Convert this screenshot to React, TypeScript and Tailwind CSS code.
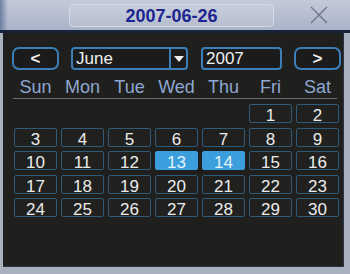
const weekDays = ["Sun", "Mon", "Tue", "Wed", "Thu", "Fri", "Sat"];

function App() {
    const cells: (number | null)[] = [null, null, null, null, null];
    for (let d = 1; d <= 30; d++) cells.push(d);
    const selected = [13, 14];

    return (
        <div
            className="w-[350px] h-[274px] bg-[#a9b1be] flex flex-col overflow-hidden"
            style={{ fontFamily: '"Liberation Sans", Arial, sans-serif' }}>
            {/* title bar */}
            <div className="h-[30px] flex items-center relative bg-gradient-to-b from-[#c3cad9] to-[#aab4c8]">
                <div className="absolute left-0 top-0 h-full w-[8px] bg-gradient-to-r from-[#6c7ea2] to-transparent" />
                <div className="ml-[69px] mt-[1px] w-[205px] h-[23px] rounded-[4px] border border-[#d4d9e3] bg-gradient-to-b from-[#c8cedb] to-[#b7bfd0] flex items-center justify-center">
                    <span className="text-[18px] font-bold text-[#1d2590] leading-none">
                        2007-06-26
                    </span>
                </div>
                <svg className="ml-[35px]" width="20" height="18" viewBox="0 0 20 18">
                    <path d="M2 1 L18 17 M18 1 L2 17" stroke="#6e7585" strokeWidth="1.4" fill="none" />
                </svg>
            </div>
            <div className="h-[3px] bg-[#17233a]" />

            {/* body */}
            <div className="flex-1 ml-[3px] mr-[6px] mb-[7px] bg-[#1f201d] border-r border-b border-[#2b3346] flex flex-col">
                {/* controls */}
                <div className="flex items-center h-[23px] mt-[14px] ml-[9px] text-[17px] text-[#f0f0f0]">
                    <div className="w-[47px] h-[23px] rounded-[7px] border-2 border-[#3c7fb8] bg-[#1a1b1a] flex items-center justify-center leading-none font-bold">
                        &lt;
                    </div>
                    <div className="ml-[12px] w-[117px] h-[23px] rounded-[4px] border-2 border-[#3c7fb8] bg-[#1a1b1a] flex items-stretch">
                        <div className="flex-1 flex items-center pl-[3px] leading-none">June</div>
                        <div className="w-[17px] border-l-2 border-[#3c7fb8] flex items-center justify-center">
                            <svg width="10" height="6" viewBox="0 0 10 6">
                                <path d="M0 0 L10 0 L5 6 Z" fill="#f0f0f0" />
                            </svg>
                        </div>
                    </div>
                    <div className="ml-[13px] w-[81px] h-[23px] rounded-[4px] border-2 border-[#3c7fb8] bg-[#1a1b1a] flex items-center pl-[3px] leading-none">
                        2007
                    </div>
                    <div className="ml-[12px] w-[47px] h-[23px] rounded-[7px] border-2 border-[#3c7fb8] bg-[#1a1b1a] flex items-center justify-center leading-none font-bold">
                        &gt;
                    </div>
                </div>

                {/* weekday header */}
                <div className="ml-[11px] mt-[7px] grid grid-cols-[repeat(7,43px)] gap-x-[4px] text-[18px] leading-[20px] text-[#8fa6d0]">
                    {weekDays.map((w) => (
                        <div key={w} className="text-center">
                            {w}
                        </div>
                    ))}
                </div>
                <div className="ml-[10px] w-[324px] h-[1px] mt-[1px] bg-[#6c6f72]" />

                {/* days */}
                <div className="ml-[11px] mt-[5px] grid grid-cols-[repeat(7,43px)] auto-rows-[19px] gap-x-[4px] gap-y-[4.5px] text-[17px] leading-[19px]">
                    {cells.map((d, i) =>
                        d === null ? (
                            <div key={i} />
                        ) : (
                            <div
                                key={i}
                                className={`${
                                    selected.includes(d)
                                        ? "bg-[#3a9fdc] text-[#e6f2fb] border-[#3a9fdc]"
                                        : "bg-[#20211e] text-[#ececec] border-[#2f5b79]"
                                } border rounded-[2px] text-center pt-[1px]`}>
                                {d}
                            </div>
                        )
                    )}
                </div>
            </div>
        </div>
    );
}

export default App;
